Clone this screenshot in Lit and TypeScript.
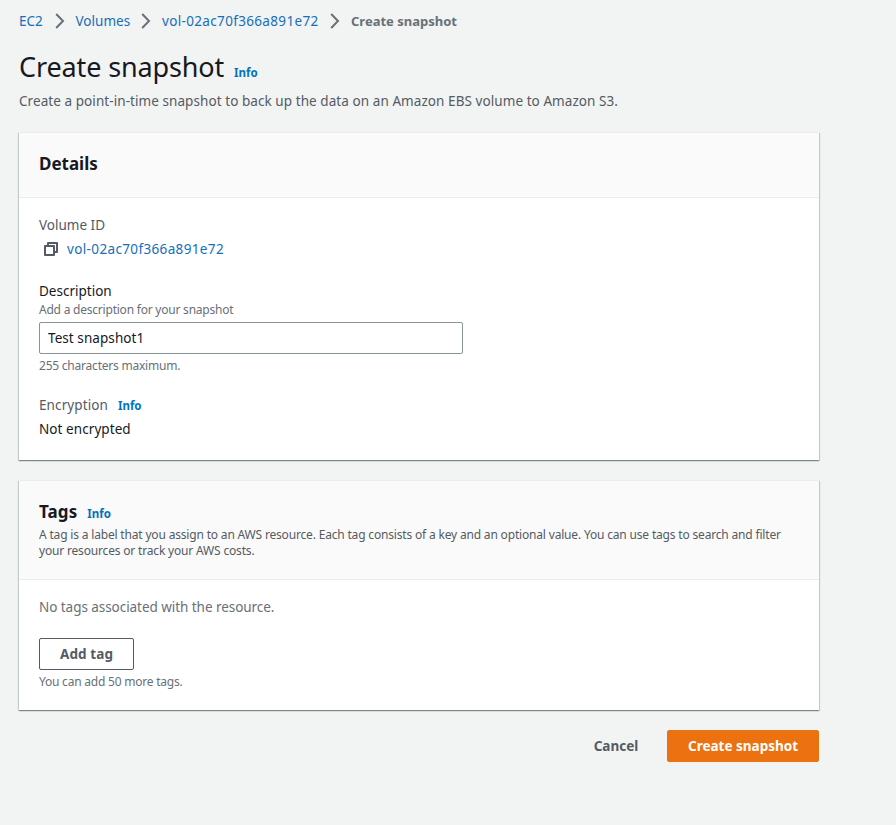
import { LitElement, html, css } from "lit";
import { customElement } from "lit/decorators.js";

@customElement("app-root")
export class AppRoot extends LitElement {
  static styles = css`
    :host {
      display: block;
      box-sizing: border-box;
      min-height: 825px;
      padding: 10px 77px 0 19px;
      background: #f2f3f3;
      color: #16191f;
      font: 13.5px/22px "Noto Sans", "Open Sans", sans-serif;
      white-space: nowrap;
    }
    * { box-sizing: border-box; }
    h1, h2, p { margin: 0; }
    a { color: #166fb9; text-decoration: none; }
    .crumbs { display: flex; height: 22px; }
    .crumbs svg { flex: none; margin: 3px 8px 0; }
    .crumbs b { color: #687078; font-weight: 700; font-size: 13px; }
    .ec2 { width: 24.5px; }
    .volumes { width: 54.5px; letter-spacing: 0.02px; }
    .volume { width: 157px; letter-spacing: 0.34px; }
    .title { display: flex; margin-top: 17px; height: 37px; }
    h1 { width: 205px; font-size: 27px; line-height: 36px; font-weight: 400; letter-spacing: -0.13px; }
    .info { color: #0073bb; font-size: 11.5px; line-height: 24px; height: 22px; font-weight: 700; margin-left: 10px; }
    .title .info { line-height: 47px; }
    .lead { margin-top: 4px; color: #545b64; letter-spacing: 0.07px; }
    .card {
      width: 800px;
      background: #fff;
      box-shadow: 0 1px 1px 0 rgba(0, 28, 36, 0.3), 1px 1px 1px 0 rgba(0, 28, 36, 0.15), -1px 1px 1px 0 rgba(0, 28, 36, 0.15);
      border-top: 1px solid #eaeded;
      margin-top: 20px;
    }
    .head { background: #fafafa; border-bottom: 1px solid #eaeded; padding: 20px; }
    .details .head { height: 65px; }
    h2 { font-size: 17px; line-height: 22px; font-weight: 700; letter-spacing: -0.02px; }
    .tags h2 { letter-spacing: 0.1px; }
    .tags .info { line-height: 26px; }
    .row { display: flex; }
    .tags .head p { margin-top: 4px; font-size: 12px; line-height: 16px; color: #545b64; letter-spacing: -0.176px; }
    .body { padding: 16px 20px 20px; }
    .fields { display: flex; flex-direction: column; gap: 20px; }
    .label { color: #545b64; }
    .row .label { letter-spacing: 0.1px; }
    .value { margin-top: 2px; display: flex; letter-spacing: 0.07px; }
    .value svg { margin: 3px 8px 0 4px; }
    .value a { letter-spacing: 0.36px; }
    .hint { font-size: 12px; line-height: 16px; color: #687078; letter-spacing: -0.22px; }
    .input {
      display: block; width: 424px; height: 32px; margin: 4px 0;
      border: 1px solid #879596; border-radius: 2px; background: #fff;
      padding: 0 8px 1px; font: inherit; color: #16191f; letter-spacing: 0.07px;
    }
    .empty { color: #687078; letter-spacing: -0.05px; }
    .btn {
      height: 32px; padding: 0; border-radius: 2px; border: 1px solid #545b64;
      background: #fff; color: #545b64; font: inherit; font-weight: 700;
    }
    .add { display: block; width: 95px; margin: 20px 0 4px; letter-spacing: 0.1px; }
    .foot { display: flex; justify-content: flex-end; gap: 8px; width: 800px; margin-top: 20px; }
    .cancel { width: 86px; border-color: transparent; background: transparent; }
    .create { width: 152px; border-color: #ec7211; background: #ec7211; color: #fff; }
  `;

  private chevron() {
    return html`<svg width="16" height="16" viewBox="0 0 16 16" fill="none" stroke="#687078" stroke-width="2"><path d="M4.2 1l6.8 7-6.8 7" /></svg>`;
  }

  render() {
    return html`
      <nav class="crumbs">
        <a class="ec2">EC2</a>${this.chevron()}
        <a class="volumes">Volumes</a>${this.chevron()}
        <a class="volume">vol-02ac70f366a891e72</a>${this.chevron()}
        <b>Create snapshot</b>
      </nav>
      <div class="title"><h1>Create snapshot</h1><a class="info">Info</a></div>
      <p class="lead">Create a point-in-time snapshot to back up the data on an Amazon EBS volume to Amazon S3.</p>

      <section class="card details">
        <div class="head"><h2>Details</h2></div>
        <div class="body fields">
          <div>
            <div class="label">Volume ID</div>
            <div class="value">
              <svg width="16" height="16" viewBox="0 0 16 16" fill="none" stroke="#545b64" stroke-width="2" stroke-linejoin="round">
                <path d="M2 5h9v9H2z" /><path d="M5 5V2h9v9h-3" />
              </svg>
              <a>vol-02ac70f366a891e72</a>
            </div>
          </div>
          <div>
            <div>Description</div>
            <div class="hint">Add a description for your snapshot</div>
            <input class="input" .value=${"Test snapshot1"} />
            <div class="hint">255 characters maximum.</div>
          </div>
          <div>
            <div class="row"><span class="label">Encryption</span><a class="info">Info</a></div>
            <div class="value">Not encrypted</div>
          </div>
        </div>
      </section>

      <section class="card tags">
        <div class="head">
          <div class="row"><h2>Tags</h2><a class="info">Info</a></div>
          <p>A tag is a label that you assign to an AWS resource. Each tag consists of a key and an optional value. You can use tags to search and filter<br />your resources or track your AWS costs.</p>
        </div>
        <div class="body">
          <div class="empty">No tags associated with the resource.</div>
          <button class="btn add">Add tag</button>
          <div class="hint">You can add 50 more tags.</div>
        </div>
      </section>

      <div class="foot">
        <button class="btn cancel">Cancel</button>
        <button class="btn create">Create snapshot</button>
      </div>
    `;
  }
}
